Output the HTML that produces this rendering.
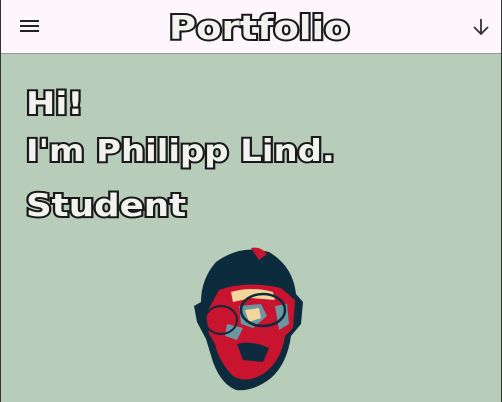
<!DOCTYPE html>
<html><head><meta charset="utf-8"><style>
html,body{margin:0;padding:0;width:502px;height:402px;overflow:hidden;background:#b9cfbb;}
.wrap{position:absolute;left:0;top:0;width:500px;height:402px;border-left:1px solid #333;border-right:1px solid #333;background:#b8cdb9;}
.hdr{position:absolute;left:0;top:0;width:500px;height:53px;background:#fdf7fd;border-bottom:1px solid #999;}
.o{font-family:"DejaVu Sans","Liberation Sans",sans-serif;font-weight:900;color:#f2f2f0;-webkit-text-stroke:4px #1a1a1a;paint-order:stroke fill;text-shadow:1px 1px 0 #1a1a1a;position:absolute;white-space:nowrap;transform-origin:left top;}
.title{left:168px;top:8px;font-size:33px;transform:scaleX(1.12);}
.l{left:25px;font-size:31px;transform:scaleX(1.13);}
</style></head><body>
<div class="wrap">
<div class="hdr">
<svg style="position:absolute;left:19px;top:19px" width="20" height="15"><rect x="0" y="1" width="19" height="2" fill="#222"/><rect x="0" y="6" width="19" height="2" fill="#222"/><rect x="0" y="11" width="19" height="2" fill="#222"/></svg>
<div class="o title">Portfolio</div>
<svg style="position:absolute;left:470px;top:17px" width="20" height="20"><path d="M10 2V17M3 10L10 17L17 10" stroke="#333" stroke-width="1.8" fill="none"/></svg>
</div>
<div class="o l" style="top:86px">Hi!</div>
<div class="o l" style="top:134px;font-size:30px">I'm Philipp Lind.</div>
<div class="o l" style="top:188px;transform:scaleX(1.15)">Student</div>
<svg style="position:absolute;left:190px;top:244px" width="116" height="150" viewBox="0 0 116 150">
<path d="M25 18 Q50 0 78 8 Q102 22 105 50 L112 58 L110 80 L100 92 Q96 120 80 134 Q62 148 45 146 Q30 140 22 118 L15 95 L6 78 L3 62 L10 58 Q10 35 25 18Z" fill="#0c2b3d"/>
<path d="M28 46 Q55 36 90 44 L104 56 L102 84 L94 92 Q90 118 72 130 Q55 140 42 132 Q28 118 24 100 L18 90 L15 70 Z" fill="#c8142f"/>
<path d="M40 48 Q60 42 82 48 L84 56 L60 54 L42 58Z" fill="#f3d79a"/>
<path d="M48 62 L70 60 L76 72 L62 84 L50 80Z" fill="#6a97a2"/>
<path d="M54 66 L68 64 L70 74 L58 78Z" fill="#f3d79a"/>
<path d="M36 80 L52 84 L46 96 L34 92Z" fill="#6a97a2"/>
<path d="M84 62 L96 60 L98 80 L88 86Z" fill="#6a97a2"/>
<path d="M60 4 Q70 2 76 10 L68 16Z" fill="#c8142f"/>
<ellipse cx="30" cy="76" rx="16" ry="14" fill="none" stroke="#0c2b3d" stroke-width="2"/>
<ellipse cx="72" cy="66" rx="22" ry="16" fill="none" stroke="#0c2b3d" stroke-width="2.5"/>
<path d="M46 100 Q60 96 78 104 L72 118 L52 116Z" fill="#0c2b3d"/>
</svg>
</div>
</body></html>
